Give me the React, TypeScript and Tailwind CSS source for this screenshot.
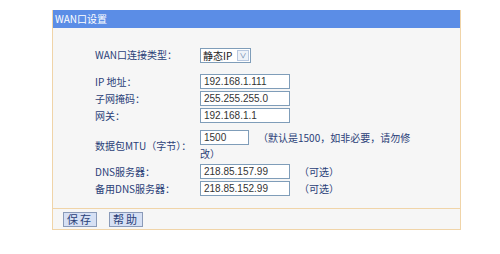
import React from 'react';

const label = "text-[10px] text-[#2b3f78] leading-none whitespace-nowrap";
const field =
  "h-[15px] border border-[#7f9db9] bg-white px-[3px] text-[10px] text-[#333] leading-[13px] font-['Liberation_Sans',sans-serif]";

function Row({ name, children, h = 17 }: { name: string; children: React.ReactNode; h?: number }) {
  return (
    <div className="flex items-center" style={{ height: h }}>
      <div className={`w-[105px] ${label}`}>{name}</div>
      {children}
    </div>
  );
}

export default function App() {
  return (
    <div className="w-[500px] h-[254px] bg-white pt-[10px] pl-[52px] font-['Noto_Sans_CJK_SC',sans-serif]">
      <div className="w-[409px] border border-t-0 border-[#f0d4a8] bg-[#f6f6f6]">
        <div className="h-[18px] bg-[#5b8de6] pl-[2px] flex items-center text-[10px] text-white leading-none">
          WAN口设置
        </div>

        <div className="pl-[42px] pt-[18px] pb-[11px]">
          <Row name="WAN口连接类型：" h={18}>
            <div className="flex h-[15px] w-[51px] border border-[#7f9db9] bg-white">
              <span className="flex-1 pl-[2px] text-[10px] leading-[13px] text-[#222]">静态IP</span>
              <span className="w-[12px] m-[1px] border border-[#b8c8e0] bg-[#eef2f8] text-[7px] leading-[9px] text-[#5070a0] text-center">
                ∨
              </span>
            </div>
          </Row>
          <div className="h-[9px]" />
          <Row name="IP 地址：">
            <div className={`w-[90px] ${field}`}>192.168.1.111</div>
          </Row>
          <Row name="子网掩码：">
            <div className={`w-[90px] ${field}`}>255.255.255.0</div>
          </Row>
          <Row name="网关：">
            <div className={`w-[90px] ${field}`}>192.168.1.1</div>
          </Row>
          <div className="h-[5px]" />
          <div className="flex items-center h-[33px]">
            <div className={`w-[105px] ${label}`}>数据包MTU（字节）：</div>
            <div className="flex flex-col text-[10px] leading-[16px] text-[#2b3f78]">
              <div className="flex items-center">
                <span className={`w-[49px] mr-[9px] ${field}`}>1500</span>
                <span className="whitespace-nowrap">（默认是1500，如非必要，请勿修</span>
              </div>
              <span>改）</span>
            </div>
          </div>
          <div className="h-[1px]" />
          <Row name="DNS服务器：">
            <div className={`w-[90px] ${field}`}>218.85.157.99</div>
            <span className="ml-[9px] text-[10px] text-[#2b3f78]">（可选）</span>
          </Row>
          <Row name="备用DNS服务器：">
            <div className={`w-[90px] ${field}`}>218.85.152.99</div>
            <span className="ml-[9px] text-[10px] text-[#2b3f78]">（可选）</span>
          </Row>
        </div>

        <div className="h-[21px] border-t border-[#f0d4a8] flex items-center gap-[12px] pl-[10px]">
          <button className="h-[15px] w-[34px] border border-[#8a9ab8] bg-[#d6e0f4] text-[11px] leading-[13px] tracking-[2px] text-[#2b3f78]">
            保存
          </button>
          <button className="h-[15px] w-[34px] border border-[#8a9ab8] bg-[#d6e0f4] text-[11px] leading-[13px] tracking-[2px] text-[#2b3f78]">
            帮助
          </button>
        </div>
      </div>
    </div>
  );
}
